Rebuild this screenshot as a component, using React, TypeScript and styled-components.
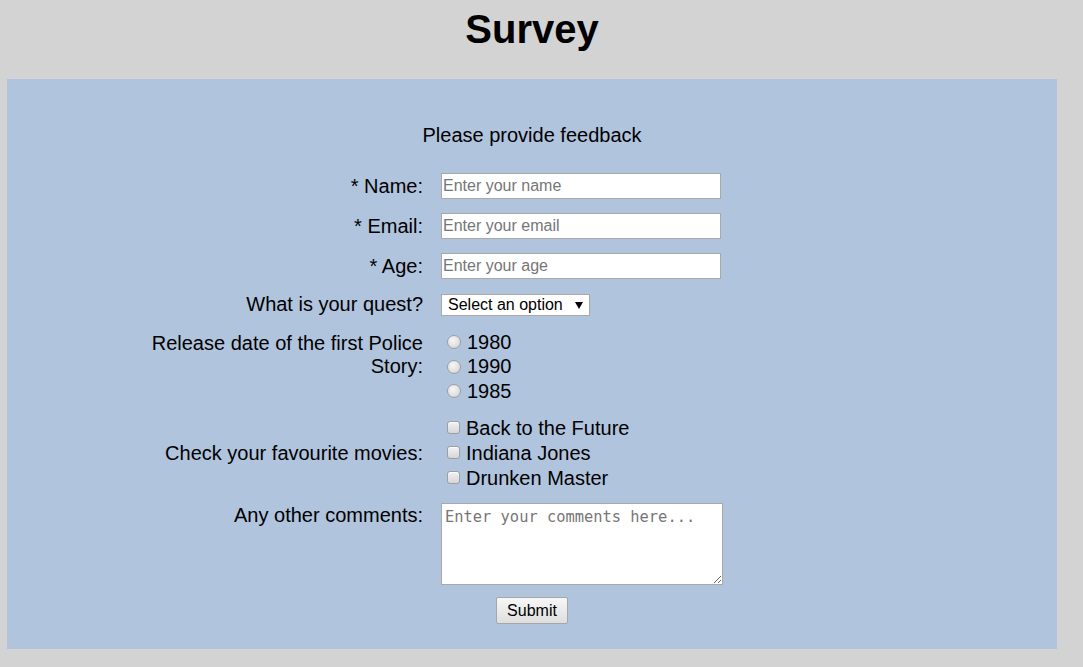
import React from "react";
import styled, { createGlobalStyle } from "styled-components";

const GlobalStyle = createGlobalStyle`
  html, body {
    margin: 0;
    padding: 0;
    background: #d3d3d3;
    font-family: "Liberation Sans", Arial, sans-serif;
    color: #000;
  }
`;

const Page = styled.div`
  width: 1050px;
  margin-left: 7px;
`;

const Title = styled.h1`
  margin: 6px 0 27px;
  font-size: 40px;
  line-height: 46px;
  font-weight: bold;
  text-align: center;
`;

const Panel = styled.div`
  background: #b0c4de;
  padding: 45px 0 25px;
`;

const Intro = styled.p`
  margin: 0 0 26px;
  font-size: 20px;
  line-height: 23px;
  text-align: center;
`;

const Form = styled.form`
  display: flex;
  flex-direction: column;
`;

const Row = styled.div<{ $align?: string; $top?: number }>`
  display: grid;
  grid-template-columns: 300px 1fr;
  column-gap: 18px;
  padding-left: 116px;
  align-items: ${(p) => p.$align || "center"};
  margin-top: ${(p) => (p.$top ?? 14)}px;
`;

const Label = styled.label<{ $pad?: number }>`
  font-size: 20px;
  line-height: 23px;
  text-align: right;
  padding-top: ${(p) => p.$pad || 0}px;
`;

const TextInput = styled.input`
  display: block;
  box-sizing: border-box;
  width: 280px;
  height: 26px;
  margin: 0;
  border: 1px solid #a9a9a9;
  padding: 0 1px;
  background: #fff;
  font-family: "Liberation Sans", Arial, sans-serif;
  font-size: 16px;
  outline: none;
  &::placeholder {
    color: #767676;
  }
`;

const SelectWrap = styled.span`
  position: relative;
  display: block;
  width: 149px;
  height: 22px;
`;

const Select = styled.select`
  display: block;
  box-sizing: border-box;
  appearance: none;
  -webkit-appearance: none;
  width: 149px;
  height: 22px;
  margin: 0;
  border: 1px solid #a9a9a9;
  border-radius: 0;
  background: #fff;
  padding: 0 0 0 6px;
  font-family: "Liberation Sans", Arial, sans-serif;
  font-size: 16px;
  color: #000;
  outline: none;
`;

const Arrow = styled.svg`
  position: absolute;
  left: 134px;
  top: 8px;
  pointer-events: none;
`;

const Group = styled.div`
  display: flex;
  flex-direction: column;
`;

const Option = styled.label<{ $h: number }>`
  display: flex;
  align-items: center;
  height: ${(p) => p.$h}px;
  font-size: 20px;
  line-height: 23px;
`;

const Radio = styled.input`
  appearance: none;
  -webkit-appearance: none;
  box-sizing: border-box;
  width: 14px;
  height: 14px;
  margin: 0 6px 0 6px;
  border-radius: 50%;
  border: 1px solid #9e9e9e;
  background: radial-gradient(circle at 40% 35%, #f6f6f6 0%, #e2e2e2 55%, #c9c9c9 100%);
`;

const Check = styled.input`
  appearance: none;
  -webkit-appearance: none;
  box-sizing: border-box;
  width: 13px;
  height: 13px;
  margin: 0 6px 2px 6px;
  border-radius: 3px;
  border: 1px solid #9e9e9e;
  background: linear-gradient(#f2f2f2, #d6d6d6);
  box-shadow: inset 0 1px 1px rgba(255, 255, 255, 0.8);
`;

const TextArea = styled.textarea`
  display: block;
  box-sizing: border-box;
  width: 282px;
  height: 82px;
  margin: 0;
  border: 1px solid #a9a9a9;
  padding: 3px 3px;
  background: #fff;
  font-family: "DejaVu Sans Mono", "Liberation Mono", monospace;
  font-size: 15.4px;
  line-height: 20px;
  outline: none;
  &::placeholder {
    color: #767676;
  }
`;

const SubmitRow = styled.div`
  display: flex;
  justify-content: center;
  margin-top: 12px;
`;

const SubmitButton = styled.button`
  box-sizing: border-box;
  width: 72px;
  height: 27px;
  border: 1px solid #a6a6a6;
  border-radius: 2px;
  background: linear-gradient(#f7f7f7, #dedede);
  font-family: "Liberation Sans", Arial, sans-serif;
  font-size: 16px;
  color: #000;
  padding: 0;
`;

export default function App() {
  return (
    <>
      <GlobalStyle />
      <Page>
        <Title>Survey</Title>
        <Panel>
          <Intro>Please provide feedback</Intro>
          <Form onSubmit={(e) => e.preventDefault()}>
            <Row $top={0}>
              <Label htmlFor="name">* Name:</Label>
              <div>
                <TextInput id="name" placeholder="Enter your name" />
              </div>
            </Row>
            <Row>
              <Label htmlFor="email">* Email:</Label>
              <div>
                <TextInput id="email" placeholder="Enter your email" />
              </div>
            </Row>
            <Row>
              <Label htmlFor="age">* Age:</Label>
              <div>
                <TextInput id="age" placeholder="Enter your age" />
              </div>
            </Row>
            <Row>
              <Label htmlFor="quest">What is your quest?</Label>
              <div>
                <SelectWrap>
                  <Select id="quest" defaultValue="">
                    <option value="">Select an option</option>
                    <option value="grail">To seek the Holy Grail</option>
                  </Select>
                  <Arrow width="8" height="7" viewBox="0 0 8 7">
                    <path d="M0 0 H8 L4 7 Z" fill="#000" />
                  </Arrow>
                </SelectWrap>
              </div>
            </Row>
            <Row $align="start">
              <Label $pad={2}>Release date of the first Police Story:</Label>
              <Group>
                {["1980", "1990", "1985"].map((y) => (
                  <Option key={y} $h={24.5}>
                    <Radio type="radio" name="release" value={y} />
                    {y}
                  </Option>
                ))}
              </Group>
            </Row>
            <Row $top={12}>
              <Label>Check your favourite movies:</Label>
              <Group>
                {["Back to the Future", "Indiana Jones", "Drunken Master"].map((m) => (
                  <Option key={m} $h={25}>
                    <Check type="checkbox" name="movies" value={m} />
                    {m}
                  </Option>
                ))}
              </Group>
            </Row>
            <Row $align="start" $top={12.5}>
              <Label $pad={1} htmlFor="comments">Any other comments:</Label>
              <div>
                <TextArea id="comments" placeholder="Enter your comments here..." />
              </div>
            </Row>
            <SubmitRow>
              <SubmitButton type="submit">Submit</SubmitButton>
            </SubmitRow>
          </Form>
        </Panel>
      </Page>
    </>
  );
}
